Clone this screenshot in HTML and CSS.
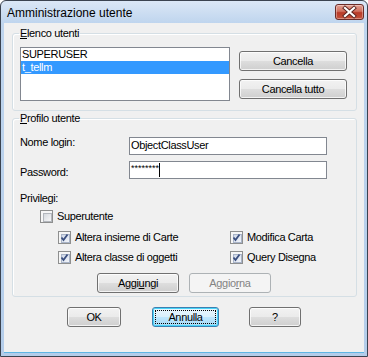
FILE: index.html
```html
<!DOCTYPE html>
<html lang="it">

<head>
    <meta charset="UTF-8">
    <title>Amministrazione utente</title>
    <link rel="stylesheet" href="styles.css">
</head>

<body>
    <div class="window">
        <div class="titlebar">
            <span class="title">Amministrazione utente</span>
            <span class="close">
                <svg width="29" height="16" viewBox="0 0 29 16">
                    <path d="M10 4 L19 12 M19 4 L10 12" stroke="#5a2320" stroke-width="4" stroke-linecap="square"/>
                    <path d="M10 4 L19 12 M19 4 L10 12" stroke="#fff" stroke-width="2.2" stroke-linecap="square"/>
                </svg>
            </span>
        </div>

        <div class="client">
            <fieldset class="group users">
                <legend><u>E</u>lenco utenti</legend>
                <div class="row">
                    <div class="list">
                        <div class="item">SUPERUSER</div>
                        <div class="item sel">t_tellm</div>
                    </div>
                    <div class="side">
                        <button class="btn wide">Cancella</button>
                        <button class="btn wide">Cancella tutto</button>
                    </div>
                </div>
            </fieldset>

            <fieldset class="group profile">
                <legend><u>P</u>rofilo utente</legend>
                <div class="fields">
                    <label class="lbl login">Nome login:</label>
                    <div class="edit">ObjectClassUser</div>
                    <label class="lbl pass">Password:</label>
                    <div class="edit"><span class="stars">********</span><span class="caret"></span></div>
                </div>

                <div class="lbl priv">Privilegi:</div>
                <div class="check super"><span class="box"></span>Superutente</div>

                <div class="perms">
                    <div class="check"><span class="box on"><svg width="13" height="13"><path d="M3.5 6.5 L5.5 9 L9.5 3.5" fill="none" stroke="#3b4f7f" stroke-width="1.8"/></svg></span>Altera insieme di Carte</div>
                    <div class="check"><span class="box on"><svg width="13" height="13"><path d="M3.5 6.5 L5.5 9 L9.5 3.5" fill="none" stroke="#3b4f7f" stroke-width="1.8"/></svg></span>Modifica Carta</div>
                    <div class="check"><span class="box on"><svg width="13" height="13"><path d="M3.5 6.5 L5.5 9 L9.5 3.5" fill="none" stroke="#3b4f7f" stroke-width="1.8"/></svg></span>Altera classe di oggetti</div>
                    <div class="check"><span class="box on"><svg width="13" height="13"><path d="M3.5 6.5 L5.5 9 L9.5 3.5" fill="none" stroke="#3b4f7f" stroke-width="1.8"/></svg></span>Query Disegna</div>
                </div>

                <div class="actions">
                    <button class="btn mid">Aggi<u>u</u>ngi</button>
                    <button class="btn mid" disabled>Aggio<u>r</u>na</button>
                </div>
            </fieldset>

            <div class="footer">
                <button class="btn ok">OK</button>
                <button class="btn cancel focus">Annulla</button>
                <button class="btn help">?</button>
            </div>
        </div>
    </div>
</body>

</html>
```

FILE: styles.css
```css
body {
    margin: 0;
    width: 368px;
    height: 357px;
    overflow: hidden;
    font-family: "Liberation Sans", Arial, sans-serif;
    font-size: 11px;
    letter-spacing: -0.35px;
    color: #000;
}

.window {
    box-sizing: border-box;
    width: 368px;
    height: 357px;
    display: flex;
    flex-direction: column;
    border: 1px solid #3b4350;
    border-radius: 6px 6px 0 0;
    background: linear-gradient(#dbe7f6 0, #bfd5ee 22px, #b4cdea 100%);
}

/* title bar */
.titlebar {
    box-sizing: border-box;
    height: 22px;
    display: flex;
    justify-content: space-between;
    align-items: flex-start;
    padding: 2px 3px 0 6px;
}

.title {
    font-size: 12px;
    line-height: 20px;
    letter-spacing: 0;
}

.close {
    box-sizing: border-box;
    width: 29px;
    height: 16px;
    margin-top: 1px;
    border: 1px solid #6b2b27;
    border-radius: 3px;
    background: linear-gradient(#e3a093 0%, #d0705f 45%, #b83a28 55%, #c4523c 100%);
    box-shadow: inset 0 0 0 1px rgba(255, 255, 255, .35);
}

.close svg {
    display: block;
    margin: -1px;
}

.client {
    flex: 1;
    margin: 0 3px 3px;
    background: #f0f0f0;
    border-bottom: 1px solid #5fb5e3;
}

/* group boxes */
.group {
    margin: 4px 7px 0 8px;
    padding: 7px 9px 9px 7px;
    border: 1px solid #d5dfe5;
    border-radius: 3px;
    box-shadow: inset 1px 1px 0 #fff;
}

.group legend {
    padding: 0 1px;
    margin-left: -1px;
    line-height: 13px;
}

.profile {
    margin-top: 1px;
    padding-top: 0;
    padding-bottom: 3px;
}

.row {
    display: flex;
    gap: 9px;
}

.list {
    box-sizing: border-box;
    width: 210px;
    height: 54px;
    border: 1px solid #828790;
    background: #fff;
}

.item {
    line-height: 13px;
    padding-left: 1px;
}

.sel {
    background: #3399ff;
    color: #fff;
}

.side {
    display: flex;
    flex-direction: column;
    gap: 8px;
    padding-top: 4px;
}

/* buttons */
.btn {
    box-sizing: border-box;
    height: 20px;
    padding: 0;
    font: inherit;
    letter-spacing: inherit;
    color: #000;
    border: 1px solid #707070;
    border-radius: 3px;
    background: linear-gradient(#f2f2f2 0%, #ebebeb 48%, #dddddd 52%, #cfcfcf 100%);
    box-shadow: inset 0 0 0 1px rgba(255, 255, 255, .75);
}

.btn:disabled {
    color: #838383;
    border-color: #adb2b5;
    background: #f4f4f4;
    box-shadow: none;
}

.wide {
    width: 108px;
}

.mid {
    width: 82px;
}

.ok {
    width: 54px;
}

.cancel {
    width: 67px;
}

.help {
    width: 52px;
}

.focus {
    border-color: #3c7fb1;
    background: linear-gradient(#eaf6fd 0%, #d9f0fc 48%, #bee6fd 52%, #a7d9f5 100%);
    box-shadow: inset 0 0 0 1px #48d4f8;
    outline: 1px dotted #000;
    outline-offset: -4px;
}

/* profile fields */
.fields {
    display: grid;
    grid-template-columns: 109px 198px;
    row-gap: 6px;
    margin-top: 12px;
}

.lbl {
    line-height: 13px;
}

.login {
    margin-top: -1px;
}

.pass {
    margin-top: 5px;
}

.edit {
    box-sizing: border-box;
    height: 18px;
    padding-left: 1px;
    line-height: 14px;
    border: 1px solid #828790;
    background: #fff;
    white-space: nowrap;
}

.stars {
    font-size: 9px;
    letter-spacing: 0;
    vertical-align: top;
    line-height: 12px;
}

.caret {
    display: inline-block;
    width: 1px;
    height: 14px;
    margin-top: 1px;
    background: #000;
    vertical-align: top;
}

.priv {
    margin-top: 13px;
}

/* checkboxes */
.check {
    display: flex;
    align-items: flex-start;
    line-height: 13px;
}

.box {
    position: relative;
    box-sizing: border-box;
    flex: none;
    width: 13px;
    height: 13px;
    margin-right: 4px;
    padding: 2px;
    border: 1px solid #8e8f8f;
    background: #f6f6f6;
}

.box::before {
    content: '';
    display: block;
    width: 7px;
    height: 7px;
    border: 1px solid #b3b7bd;
    background: linear-gradient(135deg, #d5d9de, #f7f7f8);
}

.box.on::before {
    border-color: #a9b4c8;
    background: linear-gradient(135deg, #cfd8e8, #f2f5fa);
}

.box svg {
    position: absolute;
    left: -1px;
    top: -1px;
}

.super {
    margin: 5px 0 0 20px;
}

.perms {
    display: grid;
    grid-template-columns: 172px auto;
    row-gap: 7px;
    margin: 8px 0 0 38px;
}

.actions {
    display: flex;
    gap: 10px;
    margin: 9px 0 0 77px;
}

.footer {
    display: flex;
    gap: 31px;
    margin-top: 10px;
    padding-left: 63px;
}

.footer .help {
    margin-left: -1px;
}
```
